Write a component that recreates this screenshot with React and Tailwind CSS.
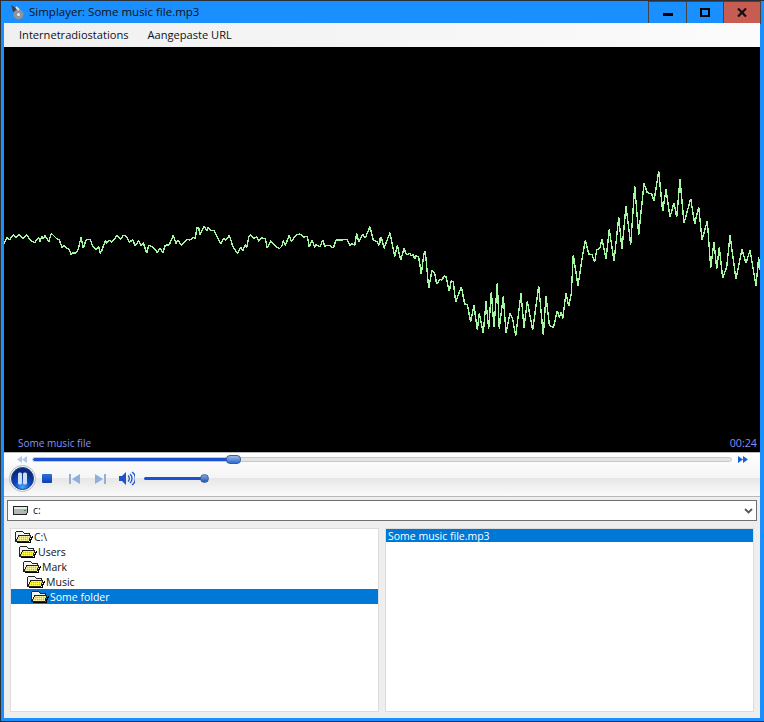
const left = "12,250 22,232 28,240 40,224 48,232 57,224 68,236 80,224 90,240 104,248 116,232 120,246 125,228 130,236 135,226 146,246 154,220 170,236 178,240 186,262 192,256 198,264 208,268 214,285 218,278 226,280 234,270 243,232 250,265 258,240 270,238 278,258 288,268 296,260 300,280 306,270 316,242 320,250 326,240 336,246 352,226 362,238 370,226 378,228 388,246 398,240 406,258 416,242 424,258 430,248 440,280 446,256 460,262 472,278 480,264 488,278 496,256 508,254 520,226 528,250 534,242 545,256 562,238 570,240 580,232 586,236 590,204 596,203 600,224 612,198 620,212 625,202 632,212 642,212 652,232 662,252 670,236 678,240 688,226 698,258 712,280 722,262 728,272 736,254 740,262 746,232 752,224 762,236 770,230 776,244 784,234 796,236 802,264 812,242 824,256 838,266 846,258 850,242 856,256 868,226 874,244 890,224 900,222 912,232 922,228 928,262 936,240 944,262 948,254 960,260 968,240 974,258 988,256 1000,264 1008,240 1024,240 1040,238 1050,256 1056,250 1064,256 1070,220 1076,246 1088,222 1096,234 1110,200 1120,240 1132,246 1136,256 1140,248";
const right = "0,234 4,232 12,265 30,218 44,290 52,256 62,300 72,266 80,284 90,280 94,288 100,282 104,298 108,286 116,292 124,342 132,280 136,274 146,385 156,330 164,340 170,372 180,358 186,360 192,348 198,350 208,394 214,362 220,366 227,426 244,380 254,432 262,434 272,486 282,436 292,510 298,460 310,520 318,424 326,506 334,395 342,502 352,370 358,506 370,408 378,520 390,460 398,478 407,528 423,400 432,504 442,424 458,510 476,378 490,526 498,408 508,494 520,504 532,452 538,472 544,456 548,476 558,398 566,438 574,400 580,284 594,378 604,310 616,240 626,282 636,284 644,306 650,270 660,264 666,236 678,296 688,208 702,304 716,172 726,268 738,138 752,254 764,78 776,224 792,70 802,98 815,102 822,124 836,34 848,154 858,88 870,172 882,128 890,172 900,58 912,190 932,116 944,192 956,140 966,240 982,182 992,324 1002,246 1010,326 1018,262 1028,354 1040,322 1050,226 1068,358 1086,268 1098,310 1110,270 1128,378 1136,290 1138,330";
const conv = (s, ox) => s.split(" ").map(p => { const [x, y] = p.split(",").map(Number); return `${(x / 3 + ox - 4).toFixed(1)},${(y / 3 + 160 - 47).toFixed(1)}`; }).join(" ");
const wave = conv(left, 0) + " " + conv(right, 380);

function Folder({ id }) {
  return (
    <svg width="19" height="13" viewBox="0 0 19 13" className="shrink-0" shapeRendering="crispEdges">
      <defs>
        <pattern id={id} width="2" height="2" patternUnits="userSpaceOnUse">
          <rect width="2" height="2" fill="#f4ec30" />
          <rect width="1" height="1" fill="#faf6a0" />
          <rect x="1" y="1" width="1" height="1" fill="#cfc62c" />
        </pattern>
      </defs>
      <path d="M1 11 V3 L3 1 H8 L10 3 H15 V5 H5 L2 11 Z" fill="#f4f4f4" stroke="#222" />
      <path d="M2 11 L5 5 H17 L15 11 Z" fill={`url(#${id})`} stroke="#222" />
      <path d="M3 12.5 H16 L18.5 6" fill="none" stroke="#000" strokeWidth="1.4" />
    </svg>
  );
}

function TreeRow({ id, label, pl, selected }) {
  return (
    <div className={selected ? "flex h-[15px] items-center gap-[1px] bg-[#0078d7] text-white" : "flex h-[15px] items-center gap-[1px] text-[#111]"} style={{ paddingLeft: pl }}>
      <Folder id={id} />
      <span className="mt-[2px]">{label}</span>
    </div>
  );
}

function OrbPause() {
  return (
    <svg width="27" height="27" viewBox="0 0 27 27">
      <defs>
        <radialGradient id="orb" cx="50%" cy="90%" r="70%">
          <stop offset="0%" stopColor="#45aaf8" />
          <stop offset="50%" stopColor="#0d4ac6" />
          <stop offset="100%" stopColor="#0a2a80" />
        </radialGradient>
      </defs>
      <circle cx="13.5" cy="13.5" r="13" fill="#f0f2f6" stroke="#b4bac6" />
      <circle cx="13.5" cy="13.5" r="11" fill="url(#orb)" stroke="#1a4496" />
      <rect x="9" y="7.5" width="4" height="12" rx="1.5" fill="#cfdcf0" />
      <rect x="14" y="7.5" width="4" height="12" rx="1.5" fill="#cfdcf0" />
    </svg>
  );
}

export default function App() {
  return (
    <div className="flex h-[722px] w-[764px] flex-col overflow-hidden border border-[#2a2f36] border-r-0 bg-[#1a8fff] font-['Open_Sans',sans-serif] text-[10.5px]">
      <div className="flex h-[22px] shrink-0 items-start justify-between">
        <div className="flex h-[22px] items-center gap-[5px] pl-[9px] text-[11.5px] text-[#111]">
          <svg width="14" height="16" viewBox="0 0 14 16">
            <path d="M1 1 L6 4 L7 7 L3 8 Z" fill="#3d424a" />
            <circle cx="8.5" cy="10.5" r="5" fill="#8d949c" />
            <circle cx="8.5" cy="10.5" r="1.5" fill="#eee" />
            <path d="M6 3 L9 6" stroke="#e3e7ea" strokeWidth="2" />
          </svg>
          <span>Simplayer: Some music file.mp3</span>
        </div>
        <div className="mr-[3px] flex h-[23px] border border-[#444]">
          <div className="flex w-[38px] items-center justify-center border-r border-[#444] pt-[3px]">
            <div className="h-[3px] w-[10px] bg-black" />
          </div>
          <div className="flex w-[37px] items-center justify-center border-r border-[#444]">
            <div className="h-[9px] w-[10px] border-2 border-black" />
          </div>
          <div className="flex w-[36px] items-center justify-center bg-[#c75c52]">
            <svg width="10" height="9" viewBox="0 0 10 9">
              <path d="M1 0.5 L9 8.5 M9 0.5 L1 8.5" stroke="#111" strokeWidth="2.2" />
            </svg>
          </div>
        </div>
      </div>

      <div className="mb-[3px] ml-[3px] mr-[4px] flex min-h-0 flex-1 flex-col bg-[#eeeeee]">
        <div className="flex h-[24px] shrink-0 items-center gap-[19px] bg-gradient-to-r from-[#f0f0f0] to-[#fbfbfb] pl-[15px] text-[11.1px] text-[#111]">
          <span>Internetradiostations</span>
          <span>Aangepaste URL</span>
        </div>

        <div className="relative h-[405px] shrink-0 bg-black">
          <svg width="756" height="405" viewBox="0 0 756 405" className="block" shapeRendering="crispEdges">
            <polyline points={wave} fill="none" stroke="#a4f8a4" strokeWidth="1.4" strokeLinejoin="bevel" />
          </svg>
          <span className="absolute bottom-[2px] left-[14px] text-[10px] leading-[14px] text-[#8590f5]">Some music file</span>
          <span className="absolute bottom-[2px] right-[3px] text-[10.7px] leading-[14px] text-[#8590f5]">00:24</span>
        </div>

        <div className="flex h-[45px] shrink-0 flex-col border-t border-b border-[#b9b9b9] bg-[linear-gradient(to_bottom,#ffffff_0%,#f5f5f5_58%,#e6e6e6_58%,#fbfbfb_100%)]">
          <div className="flex h-[12px] items-center gap-[6px] pl-[13px] pr-[12px]">
            <svg width="10" height="7" viewBox="0 0 10 7"><path d="M5 0 L0 3.5 L5 7 Z M10 0 L5 3.5 L10 7 Z" fill="#b0c8e8" /></svg>
            <div className="relative mr-[1px] h-[3px] flex-1 rounded-full bg-[#e4e4e4] outline outline-1 outline-[#c8c8c8]">
              <div className="h-[3px] w-[200px] rounded-full bg-[#1c52d0]" />
              <div className="absolute left-[193px] top-[-3px] h-[9px] w-[15px] rounded-[4px] border border-[#33609f] bg-[linear-gradient(to_bottom,#9db8e2,#2f6cd0)]" />
            </div>
            <svg width="10" height="7" viewBox="0 0 10 7"><path d="M0 0 L5 3.5 L0 7 Z M5 0 L10 3.5 L5 7 Z" fill="#1560d8" /></svg>
          </div>
          <div className="flex flex-1 items-start pl-[5px]">
            <OrbPause />
            <div className="ml-[6px] mt-[9px] h-[9px] w-[10px] rounded-[1px] bg-[linear-gradient(to_bottom,#2a6fe0,#123fae)]" />
            <svg width="12" height="10" viewBox="0 0 12 10" className="ml-[17px] mt-[9px]"><path d="M0 0 H2 V10 H0 Z M11 0 V10 L3 5 Z" fill="#8fb0dc" /></svg>
            <svg width="12" height="10" viewBox="0 0 12 10" className="ml-[13px] mt-[9px]"><path d="M10 0 H12 V10 H10 Z M1 0 V10 L9 5 Z" fill="#8fb0dc" /></svg>
            <svg width="16" height="15" viewBox="0 0 16 15" className="ml-[13px] mt-[6px]">
              <path d="M0 5 H3 L7 1 V14 L3 10 H0 Z" fill="#1a55c8" />
              <path d="M9 4.5 A4 4 0 0 1 9 10.5 M11 3 A6 6 0 0 1 11 12 M13 1 A8 8 0 0 1 13 14" fill="none" stroke="#1a55c8" strokeWidth="1.3" />
            </svg>
            <div className="relative ml-[9px] mt-[12px] h-[3px] w-[60px] rounded-full bg-[#1c52d0]">
              <div className="absolute left-[56px] top-[-3px] h-[9px] w-[9px] rounded-full border border-[#33609f] bg-[linear-gradient(to_bottom,#8fa8d4,#1c55c8)]" />
            </div>
          </div>
        </div>

        <div className="ml-[3px] mr-[3px] mt-[3px] flex h-[21px] shrink-0 items-center justify-between border border-[#707070] bg-white pl-[5px] pr-[3px]">
          <div className="flex items-center gap-[5px] text-[#111]">
            <svg width="15" height="9" viewBox="0 0 15 9" shapeRendering="crispEdges">
              <path d="M0.5 0.5 H14.5 V6.5 L13 8.5 H0.5 Z" fill="#b4b8b4" stroke="#222" />
              <path d="M1 1 H14 V3 H1 Z" fill="#e8e8e8" />
              <rect x="11" y="4" width="2" height="1" fill="#2c9a40" />
            </svg>
            <span>c:</span>
          </div>
          <svg width="9" height="6" viewBox="0 0 9 6"><path d="M1 1 L4.5 4.5 L8 1" fill="none" stroke="#555" strokeWidth="1.8" /></svg>
        </div>

        <div className="flex min-h-0 flex-1 gap-[6px] pb-[6px] pl-[6px] pr-[6px] pt-[7px]">
          <div className="w-[369px] border border-[#dcdcdc] bg-white">
            <TreeRow id="f1" label="C:\" pl={3} />
            <TreeRow id="f2" label="Users" pl={7} />
            <TreeRow id="f3" label="Mark" pl={11} />
            <TreeRow id="f4" label="Music" pl={15} />
            <TreeRow id="f5" label="Some folder" pl={19} selected />
          </div>
          <div className="flex-1 border border-[#dcdcdc] bg-white">
            <div className="flex h-[13px] items-center bg-[#0078d7] pl-[2px] text-white"><span className="mt-[2px]">Some music file.mp3</span></div>
          </div>
        </div>
      </div>
    </div>
  );
}
